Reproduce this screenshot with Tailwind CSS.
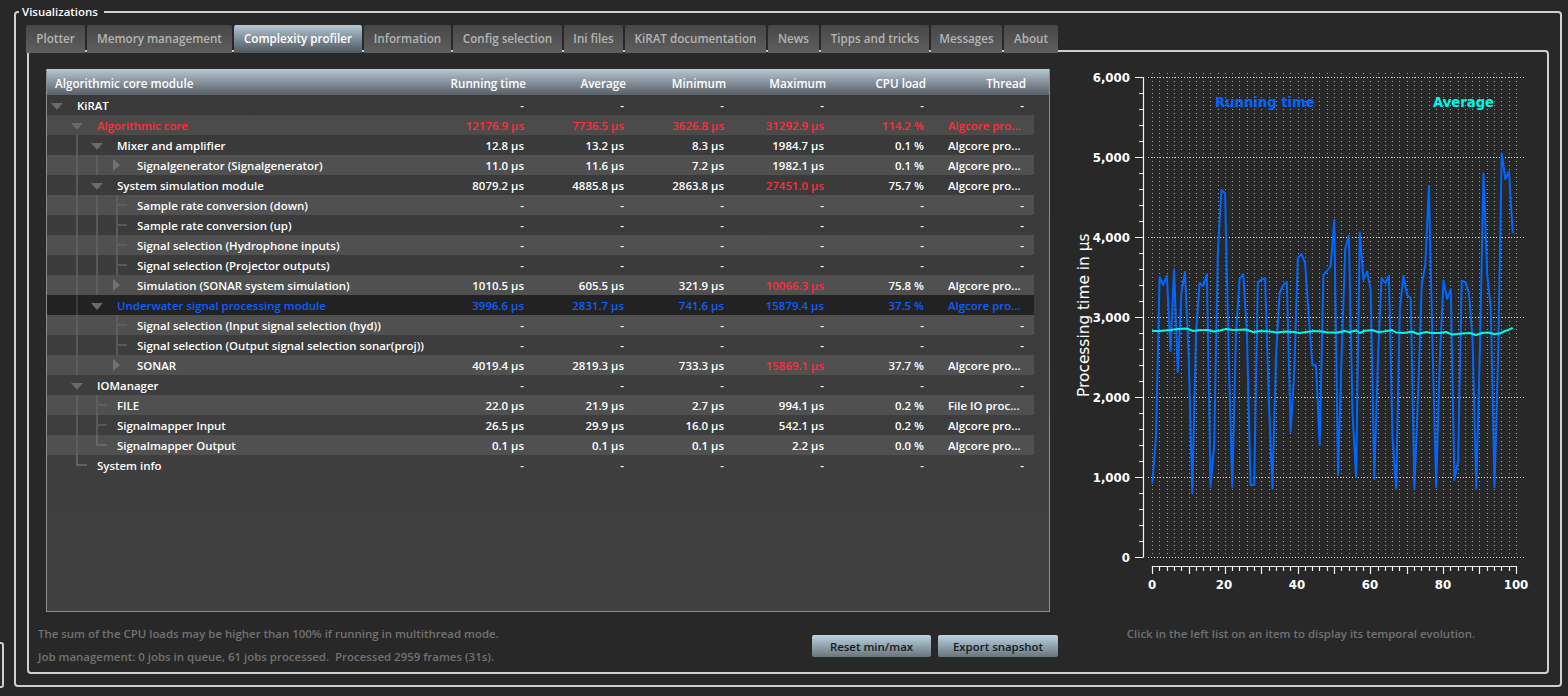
<!DOCTYPE html>
<html><head><meta charset="utf-8"><script src="https://cdn.jsdelivr.net/npm/@tailwindcss/browser@4"></script></head>
<body class="bg-[#282828] overflow-hidden">
<div class="w-[1568px] h-[696px] flex items-start font-['Open_Sans',sans-serif] text-[11.45px] font-semibold text-white">
  <div class="w-[4px] h-[46px] mt-[642px] border-2 border-l-0 border-[#cfcfcf] rounded-r-[3px] shrink-0"></div>
  <div class="relative w-[1548px] h-[676px] mt-[11px] ml-[10px] border-2 border-[#cfcfcf] rounded-[4px] pt-[12px] pl-[11px] pr-[11px]">
    <div class="absolute -top-[9px] left-[3px] bg-[#282828] pl-[3px] pr-[6px] h-[16px] leading-[16px] text-white">Visualizations</div>
    <div class="relative z-10 flex gap-[2px] h-[28px] -ml-px -mb-[3px] text-[#b4b4b4] text-[11.65px] leading-[27px] text-center">
      <div class="w-[59px] rounded-t-[2px] bg-gradient-to-b from-[#474747] to-[#5f5f5f]">Plotter</div>
      <div class="w-[145px] rounded-t-[2px] bg-gradient-to-b from-[#474747] to-[#5f5f5f]">Memory management</div>
      <div class="w-[128px] rounded-t-[2px] bg-gradient-to-b from-[#b4c8d6] to-[#4e565c] text-white">Complexity profiler</div>
      <div class="w-[87px] rounded-t-[2px] bg-gradient-to-b from-[#474747] to-[#5f5f5f]">Information</div>
      <div class="w-[109px] rounded-t-[2px] bg-gradient-to-b from-[#474747] to-[#5f5f5f]">Config selection</div>
      <div class="w-[59px] rounded-t-[2px] bg-gradient-to-b from-[#474747] to-[#5f5f5f]">Ini files</div>
      <div class="w-[141px] rounded-t-[2px] bg-gradient-to-b from-[#474747] to-[#5f5f5f]">KiRAT documentation</div>
      <div class="w-[51px] rounded-t-[2px] bg-gradient-to-b from-[#474747] to-[#5f5f5f]">News</div>
      <div class="w-[108px] rounded-t-[2px] bg-gradient-to-b from-[#474747] to-[#5f5f5f]">Tipps and tricks</div>
      <div class="w-[71px] rounded-t-[2px] bg-gradient-to-b from-[#474747] to-[#5f5f5f]">Messages</div>
      <div class="w-[54px] rounded-t-[2px] bg-gradient-to-b from-[#474747] to-[#5f5f5f]">About</div>
    </div>
    <div class="w-[1522px] h-[624px] border-2 border-[#cfcfcf] rounded-[4px] flex pl-[9px]">
      <div class="w-[1022px] shrink-0 pt-[17px]">
        <div class="ml-[8px] w-[1004px] h-[543px] border border-[#8d8d8d] bg-gradient-to-b from-[#393939] to-[#404040]">
          <div class="grid grid-cols-[387px_repeat(6,100px)] h-[26px] text-[11.65px] leading-[30px] -mt-px bg-gradient-to-b from-[#b6c9d7] to-[#5a6066] text-right">
            <div class="text-left pl-[8px]">Algorithmic core module</div><div class="pr-[8px]">Running time</div><div class="pr-[8px]">Average</div><div class="pr-[8px]">Minimum</div><div class="pr-[8px]">Maximum</div><div class="pr-[8px]">CPU load</div><div class="pr-[8px]">Thread</div>
          </div>
          <div class="w-[987px]">
          <div class="grid grid-cols-[387px_repeat(6,100px)] h-5 leading-[21px] text-right *:pr-[10px]">
            <div class="!pr-0 flex text-left"><svg class="w-5 h-5" viewBox="0 0 20 20"><path d="M4 8H16L10 15Z" fill="#6a6a6a"/></svg><span class="ml-[10px]">KiRAT</span></div><div>-</div><div>-</div><div>-</div><div>-</div><div>-</div><div>-</div>
          </div>
          <div class="grid grid-cols-[387px_repeat(6,100px)] h-5 leading-[21px] text-right *:pr-[10px] bg-[#4b4b4b] text-[#ff2d3c]">
            <div class="!pr-0 flex text-left"><span class="w-5"></span><svg class="w-5 h-5" viewBox="0 0 20 20"><path d="M4 8H16L10 15Z" fill="#6a6a6a"/></svg><span class="ml-[10px]">Algorithmic core</span></div><div>12176.9 µs</div><div>7736.5 µs</div><div>3626.8 µs</div><div>31292.9 µs</div><div>114.2 %</div><div class="text-left pl-[14px] !pr-0">Algcore pro...</div>
          </div>
          <div class="grid grid-cols-[387px_repeat(6,100px)] h-5 leading-[21px] text-right *:pr-[10px]">
            <div class="!pr-0 flex text-left"><span class="w-5"></span><svg class="w-5 h-5" viewBox="0 0 20 20"><path d="M10 0V20" stroke="#585858" stroke-width="2"/></svg><svg class="w-5 h-5" viewBox="0 0 20 20"><path d="M4 8H16L10 15Z" fill="#6a6a6a"/></svg><span class="ml-[10px]">Mixer and amplifier</span></div><div>12.8 µs</div><div>13.2 µs</div><div>8.3 µs</div><div>1984.7 µs</div><div>0.1 %</div><div class="text-left pl-[14px] !pr-0">Algcore pro...</div>
          </div>
          <div class="grid grid-cols-[387px_repeat(6,100px)] h-5 leading-[21px] text-right *:pr-[10px] bg-[#505050]">
            <div class="!pr-0 flex text-left"><span class="w-5"></span><svg class="w-5 h-5" viewBox="0 0 20 20"><path d="M10 0V20" stroke="#5e5e5e" stroke-width="2"/></svg><svg class="w-5 h-5" viewBox="0 0 20 20"><path d="M10 0V20" stroke="#5e5e5e" stroke-width="2"/></svg><svg class="w-5 h-5" viewBox="0 0 20 20"><path d="M6 4V16L13 10Z" fill="#727272"/></svg><span class="ml-[10px]">Signalgenerator (Signalgenerator)</span></div><div>11.0 µs</div><div>11.6 µs</div><div>7.2 µs</div><div>1982.1 µs</div><div>0.1 %</div><div class="text-left pl-[14px] !pr-0">Algcore pro...</div>
          </div>
          <div class="grid grid-cols-[387px_repeat(6,100px)] h-5 leading-[21px] text-right *:pr-[10px]">
            <div class="!pr-0 flex text-left"><span class="w-5"></span><svg class="w-5 h-5" viewBox="0 0 20 20"><path d="M10 0V20" stroke="#585858" stroke-width="2"/></svg><svg class="w-5 h-5" viewBox="0 0 20 20"><path d="M4 8H16L10 15Z" fill="#6a6a6a"/></svg><span class="ml-[10px]">System simulation module</span></div><div>8079.2 µs</div><div>4885.8 µs</div><div>2863.8 µs</div><div class="text-[#ff2d3c]">27451.0 µs</div><div>75.7 %</div><div class="text-left pl-[14px] !pr-0">Algcore pro...</div>
          </div>
          <div class="grid grid-cols-[387px_repeat(6,100px)] h-5 leading-[21px] text-right *:pr-[10px] bg-[#505050]">
            <div class="!pr-0 flex text-left"><span class="w-5"></span><svg class="w-5 h-5" viewBox="0 0 20 20"><path d="M10 0V20" stroke="#5e5e5e" stroke-width="2"/></svg><svg class="w-5 h-5" viewBox="0 0 20 20"><path d="M10 0V20" stroke="#5e5e5e" stroke-width="2"/></svg><svg class="w-5 h-5" viewBox="0 0 20 20"><path d="M10 0V20M10 10H20" stroke="#5e5e5e" stroke-width="2"/></svg><span class="ml-[10px]">Sample rate conversion (down)</span></div><div>-</div><div>-</div><div>-</div><div>-</div><div>-</div><div>-</div>
          </div>
          <div class="grid grid-cols-[387px_repeat(6,100px)] h-5 leading-[21px] text-right *:pr-[10px]">
            <div class="!pr-0 flex text-left"><span class="w-5"></span><svg class="w-5 h-5" viewBox="0 0 20 20"><path d="M10 0V20" stroke="#585858" stroke-width="2"/></svg><svg class="w-5 h-5" viewBox="0 0 20 20"><path d="M10 0V20" stroke="#585858" stroke-width="2"/></svg><svg class="w-5 h-5" viewBox="0 0 20 20"><path d="M10 0V20M10 10H20" stroke="#585858" stroke-width="2"/></svg><span class="ml-[10px]">Sample rate conversion (up)</span></div><div>-</div><div>-</div><div>-</div><div>-</div><div>-</div><div>-</div>
          </div>
          <div class="grid grid-cols-[387px_repeat(6,100px)] h-5 leading-[21px] text-right *:pr-[10px] bg-[#505050]">
            <div class="!pr-0 flex text-left"><span class="w-5"></span><svg class="w-5 h-5" viewBox="0 0 20 20"><path d="M10 0V20" stroke="#5e5e5e" stroke-width="2"/></svg><svg class="w-5 h-5" viewBox="0 0 20 20"><path d="M10 0V20" stroke="#5e5e5e" stroke-width="2"/></svg><svg class="w-5 h-5" viewBox="0 0 20 20"><path d="M10 0V20M10 10H20" stroke="#5e5e5e" stroke-width="2"/></svg><span class="ml-[10px]">Signal selection (Hydrophone inputs)</span></div><div>-</div><div>-</div><div>-</div><div>-</div><div>-</div><div>-</div>
          </div>
          <div class="grid grid-cols-[387px_repeat(6,100px)] h-5 leading-[21px] text-right *:pr-[10px]">
            <div class="!pr-0 flex text-left"><span class="w-5"></span><svg class="w-5 h-5" viewBox="0 0 20 20"><path d="M10 0V20" stroke="#585858" stroke-width="2"/></svg><svg class="w-5 h-5" viewBox="0 0 20 20"><path d="M10 0V20" stroke="#585858" stroke-width="2"/></svg><svg class="w-5 h-5" viewBox="0 0 20 20"><path d="M10 0V20M10 10H20" stroke="#585858" stroke-width="2"/></svg><span class="ml-[10px]">Signal selection (Projector outputs)</span></div><div>-</div><div>-</div><div>-</div><div>-</div><div>-</div><div>-</div>
          </div>
          <div class="grid grid-cols-[387px_repeat(6,100px)] h-5 leading-[21px] text-right *:pr-[10px] bg-[#505050]">
            <div class="!pr-0 flex text-left"><span class="w-5"></span><svg class="w-5 h-5" viewBox="0 0 20 20"><path d="M10 0V20" stroke="#5e5e5e" stroke-width="2"/></svg><svg class="w-5 h-5" viewBox="0 0 20 20"><path d="M10 0V20" stroke="#5e5e5e" stroke-width="2"/></svg><svg class="w-5 h-5" viewBox="0 0 20 20"><path d="M6 4V16L13 10Z" fill="#727272"/></svg><span class="ml-[10px]">Simulation (SONAR system simulation)</span></div><div>1010.5 µs</div><div>605.5 µs</div><div>321.9 µs</div><div class="text-[#ff2d3c]">10066.3 µs</div><div>75.8 %</div><div class="text-left pl-[14px] !pr-0">Algcore pro...</div>
          </div>
          <div class="grid grid-cols-[387px_repeat(6,100px)] h-5 leading-[21px] text-right *:pr-[10px] bg-[#222222] text-[#0b5fff]">
            <div class="!pr-0 flex text-left"><span class="w-5"></span><svg class="w-5 h-5" viewBox="0 0 20 20"><path d="M10 0V20" stroke="#3c3c3c" stroke-width="2"/></svg><svg class="w-5 h-5" viewBox="0 0 20 20"><path d="M4 8H16L10 15Z" fill="#6a6a6a"/></svg><span class="ml-[10px]">Underwater signal processing module</span></div><div>3996.6 µs</div><div>2831.7 µs</div><div>741.6 µs</div><div>15879.4 µs</div><div>37.5 %</div><div class="text-left pl-[14px] !pr-0">Algcore pro...</div>
          </div>
          <div class="grid grid-cols-[387px_repeat(6,100px)] h-5 leading-[21px] text-right *:pr-[10px] bg-[#505050]">
            <div class="!pr-0 flex text-left"><span class="w-5"></span><svg class="w-5 h-5" viewBox="0 0 20 20"><path d="M10 0V20" stroke="#5e5e5e" stroke-width="2"/></svg><span class="w-5"></span><svg class="w-5 h-5" viewBox="0 0 20 20"><path d="M10 0V20M10 10H20" stroke="#5e5e5e" stroke-width="2"/></svg><span class="ml-[10px]">Signal selection (Input signal selection (hyd))</span></div><div>-</div><div>-</div><div>-</div><div>-</div><div>-</div><div>-</div>
          </div>
          <div class="grid grid-cols-[387px_repeat(6,100px)] h-5 leading-[21px] text-right *:pr-[10px]">
            <div class="!pr-0 flex text-left"><span class="w-5"></span><svg class="w-5 h-5" viewBox="0 0 20 20"><path d="M10 0V20" stroke="#585858" stroke-width="2"/></svg><span class="w-5"></span><svg class="w-5 h-5" viewBox="0 0 20 20"><path d="M10 0V20M10 10H20" stroke="#585858" stroke-width="2"/></svg><span class="ml-[10px]">Signal selection (Output signal selection sonar(proj))</span></div><div>-</div><div>-</div><div>-</div><div>-</div><div>-</div><div>-</div>
          </div>
          <div class="grid grid-cols-[387px_repeat(6,100px)] h-5 leading-[21px] text-right *:pr-[10px] bg-[#505050]">
            <div class="!pr-0 flex text-left"><span class="w-5"></span><svg class="w-5 h-5" viewBox="0 0 20 20"><path d="M10 0V20" stroke="#5e5e5e" stroke-width="2"/></svg><span class="w-5"></span><svg class="w-5 h-5" viewBox="0 0 20 20"><path d="M6 4V16L13 10Z" fill="#727272"/></svg><span class="ml-[10px]">SONAR</span></div><div>4019.4 µs</div><div>2819.3 µs</div><div>733.3 µs</div><div class="text-[#ff2d3c]">15869.1 µs</div><div>37.7 %</div><div class="text-left pl-[14px] !pr-0">Algcore pro...</div>
          </div>
          <div class="grid grid-cols-[387px_repeat(6,100px)] h-5 leading-[21px] text-right *:pr-[10px]">
            <div class="!pr-0 flex text-left"><span class="w-5"></span><svg class="w-5 h-5" viewBox="0 0 20 20"><path d="M4 8H16L10 15Z" fill="#6a6a6a"/></svg><span class="ml-[10px]">IOManager</span></div><div>-</div><div>-</div><div>-</div><div>-</div><div>-</div><div>-</div>
          </div>
          <div class="grid grid-cols-[387px_repeat(6,100px)] h-5 leading-[21px] text-right *:pr-[10px] bg-[#505050]">
            <div class="!pr-0 flex text-left"><span class="w-5"></span><svg class="w-5 h-5" viewBox="0 0 20 20"><path d="M10 0V20" stroke="#5e5e5e" stroke-width="2"/></svg><svg class="w-5 h-5" viewBox="0 0 20 20"><path d="M10 0V20M10 10H20" stroke="#5e5e5e" stroke-width="2"/></svg><span class="ml-[10px]">FILE</span></div><div>22.0 µs</div><div>21.9 µs</div><div>2.7 µs</div><div>994.1 µs</div><div>0.2 %</div><div class="text-left pl-[14px] !pr-0">File IO proc...</div>
          </div>
          <div class="grid grid-cols-[387px_repeat(6,100px)] h-5 leading-[21px] text-right *:pr-[10px]">
            <div class="!pr-0 flex text-left"><span class="w-5"></span><svg class="w-5 h-5" viewBox="0 0 20 20"><path d="M10 0V20" stroke="#585858" stroke-width="2"/></svg><svg class="w-5 h-5" viewBox="0 0 20 20"><path d="M10 0V20M10 10H20" stroke="#585858" stroke-width="2"/></svg><span class="ml-[10px]">Signalmapper Input</span></div><div>26.5 µs</div><div>29.9 µs</div><div>16.0 µs</div><div>542.1 µs</div><div>0.2 %</div><div class="text-left pl-[14px] !pr-0">Algcore pro...</div>
          </div>
          <div class="grid grid-cols-[387px_repeat(6,100px)] h-5 leading-[21px] text-right *:pr-[10px] bg-[#505050]">
            <div class="!pr-0 flex text-left"><span class="w-5"></span><svg class="w-5 h-5" viewBox="0 0 20 20"><path d="M10 0V20" stroke="#5e5e5e" stroke-width="2"/></svg><svg class="w-5 h-5" viewBox="0 0 20 20"><path d="M10 0V10H20" fill="none" stroke="#6e6e6e" stroke-width="1.5"/></svg><span class="ml-[10px]">Signalmapper Output</span></div><div>0.1 µs</div><div>0.1 µs</div><div>0.1 µs</div><div>2.2 µs</div><div>0.0 %</div><div class="text-left pl-[14px] !pr-0">Algcore pro...</div>
          </div>
          <div class="grid grid-cols-[387px_repeat(6,100px)] h-5 leading-[21px] text-right *:pr-[10px]">
            <div class="!pr-0 flex text-left"><span class="w-5"></span><svg class="w-5 h-5" viewBox="0 0 20 20"><path d="M10 0V10H20" fill="none" stroke="#6e6e6e" stroke-width="1.5"/></svg><span class="ml-[10px]">System info</span></div><div>-</div><div>-</div><div>-</div><div>-</div><div>-</div><div>-</div>
          </div>
          </div>
        </div>
        <div class="flex justify-between items-start pr-[2px] mt-[10px] text-[#727272]">
          <div class="leading-[23px]"><div>The sum of the CPU loads may be higher than 100% if running in multithread mode.</div><div>Job management: 0 jobs in queue, 61 jobs processed.&nbsp; Processed 2959 frames (31s).</div></div>
          <div class="flex gap-[7px] mt-[13px] text-[#15191c]">
            <div class="w-[119px] h-[22px] leading-[23px] text-center rounded-[2px] bg-gradient-to-b from-[#bcd4e2] to-[#69757d]">Reset min/max</div>
            <div class="w-[120px] h-[22px] leading-[23px] text-center rounded-[2px] bg-gradient-to-b from-[#bcd4e2] to-[#69757d]">Export snapshot</div>
          </div>
        </div>
      </div>
      <div class="flex-1 flex flex-col">
        <svg class="w-[487px] h-[540px] mt-[8px] font-['DejaVu_Sans',sans-serif]" viewBox="1060 60 487 540">
          <g stroke="#ffffff" stroke-width="1" fill="none">
            <path stroke-dasharray="1 2" opacity="0.85" d="M1148 77.5H1524M1148 157.5H1524M1148 237.5H1524M1148 317.5H1524M1148 397.5H1524M1148 477.5H1524M1148 557.5H1524"/>
            <path stroke-dasharray="1 3" opacity="0.55" d="M1152.5 73V557M1159.5 73V557M1167.5 73V557M1174.5 73V557M1181.5 73V557M1189.5 73V557M1196.5 73V557M1203.5 73V557M1210.5 73V557M1218.5 73V557M1225.5 73V557M1232.5 73V557M1239.5 73V557M1247.5 73V557M1254.5 73V557M1261.5 73V557M1269.5 73V557M1276.5 73V557M1283.5 73V557M1290.5 73V557M1298.5 73V557M1305.5 73V557M1312.5 73V557M1319.5 73V557M1327.5 73V557M1334.5 73V557M1341.5 73V557M1349.5 73V557M1356.5 73V557M1363.5 73V557M1370.5 73V557M1378.5 73V557M1385.5 73V557M1392.5 73V557M1399.5 73V557M1407.5 73V557M1414.5 73V557M1421.5 73V557M1429.5 73V557M1436.5 73V557M1443.5 73V557M1450.5 73V557M1458.5 73V557M1465.5 73V557M1472.5 73V557M1479.5 73V557M1487.5 73V557M1494.5 73V557M1501.5 73V557M1509.5 73V557M1516.5 73V557"/>
          </g>
          <g stroke="#f2f2f2" stroke-width="1.2" fill="none">
            <path d="M1143.5 77V557.6"/>
            <path d="M1135 77.5H1143M1135 157.5H1143M1135 237.5H1143M1135 317.5H1143M1135 397.5H1143M1135 477.5H1143M1135 557.5H1143"/>
            <path d="M1139 93.5H1143M1139 109.5H1143M1139 125.5H1143M1139 141.5H1143M1139 173.5H1143M1139 189.5H1143M1139 205.5H1143M1139 221.5H1143M1139 253.5H1143M1139 269.5H1143M1139 285.5H1143M1139 301.5H1143M1139 333.5H1143M1139 349.5H1143M1139 365.5H1143M1139 381.5H1143M1139 413.5H1143M1139 429.5H1143M1139 445.5H1143M1139 461.5H1143M1139 493.5H1143M1139 509.5H1143M1139 525.5H1143M1139 541.5H1143"/>
            <path d="M1152 566.5H1516.8"/>
            <path d="M1152.5 566V574M1225.5 566V574M1298.5 566V574M1370.5 566V574M1443.5 566V574M1516.5 566V574M1261.5 566V574M1334.5 566V574M1407.5 566V574M1479.5 566V574M1189.5 566V574"/>
            <path d="M1159.5 566V571M1167.5 566V571M1174.5 566V571M1181.5 566V571M1196.5 566V571M1203.5 566V571M1210.5 566V571M1218.5 566V571M1232.5 566V571M1239.5 566V571M1247.5 566V571M1254.5 566V571M1269.5 566V571M1276.5 566V571M1283.5 566V571M1290.5 566V571M1305.5 566V571M1312.5 566V571M1319.5 566V571M1327.5 566V571M1341.5 566V571M1349.5 566V571M1356.5 566V571M1363.5 566V571M1378.5 566V571M1385.5 566V571M1392.5 566V571M1399.5 566V571M1414.5 566V571M1421.5 566V571M1429.5 566V571M1436.5 566V571M1450.5 566V571M1458.5 566V571M1465.5 566V571M1472.5 566V571M1487.5 566V571M1494.5 566V571M1501.5 566V571M1509.5 566V571"/>
          </g>
          <polyline fill="none" stroke="#0066ff" stroke-width="2" stroke-linejoin="round" points="1152.3,483.7 1156,437 1159.6,277 1163.2,285 1166.9,275.7 1170.5,350.9 1174.1,269.3 1177.8,372 1181.4,293.3 1185,271.7 1188.7,357.3 1192.3,493.3 1196,333 1199.6,283 1203.2,286 1206.9,274 1210.5,486.9 1214.2,445.3 1217.8,253 1221.4,190 1225.1,193.3 1228.7,357.3 1232.3,486.9 1236,333 1239.6,279 1243.3,274 1246.9,333 1250.5,485 1254.2,485 1257.8,282 1261.5,280 1265.1,278 1268.7,397 1272.4,488.5 1276,357 1279.6,293 1283.3,285 1286.9,282 1290.6,431.7 1294.2,373 1297.8,258 1301.5,254 1305.1,263 1308.8,317 1312.4,365.3 1316,365.3 1319.7,445 1323.4,275 1327,271 1330.7,266 1334.3,219.7 1338,475 1341.6,357 1345.2,249 1348.9,235.7 1352.5,413 1356.1,477.3 1359.8,232.5 1363.4,279.7 1367.1,271.7 1370.7,289.3 1374.3,479 1378,357 1381.6,278 1385.3,283 1388.9,275.7 1392.5,437.3 1396.2,488.5 1399.8,309 1403.5,275.7 1407.1,295 1410.7,298 1414.4,488.5 1418,397 1421.7,285 1425.3,265 1428.9,186 1432.6,349 1436.2,486.9 1439.9,357 1443.5,280.5 1447.1,298.9 1450.8,289 1454.4,479.7 1458.1,461.3 1461.7,281 1465.3,282 1469,293 1472.6,341 1476.3,488.5 1479.9,349 1483.5,173.3 1487.2,274 1490.8,309 1494.5,487 1498.1,357 1501.7,153.3 1505.4,179 1509,171.7 1512.7,233"/>
          <polyline fill="none" stroke="#00f6e6" stroke-width="2" stroke-linejoin="round" points="1152,331 1160,331 1170,330 1178,329 1187,328.5 1193,331 1200,330 1208,330 1214,331.5 1220,330.5 1226,329 1233,330 1246,329.5 1253,332 1260,331 1270,331.5 1277,332.5 1285,331.5 1294,332 1300,333 1306,332 1314,331 1322,331.5 1328,332.5 1338,332.5 1344,331 1350,332 1356,330.5 1360,333 1364,331 1372,330 1378,332 1384,331.5 1392,330 1396,332.5 1404,333 1412,331.5 1418,334 1426,332 1432,333 1440,333 1446,332 1452,334.5 1462,333.5 1470,333 1476,335 1482,333 1488,332.5 1494,334 1500,333.5 1505,331 1508,330 1512.7,328"/>
          <g fill="#ffffff" font-size="11.8" font-weight="700">
            <text x="1130" y="82" text-anchor="end">6,000</text><text x="1130" y="162" text-anchor="end">5,000</text><text x="1130" y="242" text-anchor="end">4,000</text><text x="1130" y="322" text-anchor="end">3,000</text><text x="1130" y="402" text-anchor="end">2,000</text><text x="1130" y="482" text-anchor="end">1,000</text><text x="1130" y="562" text-anchor="end">0</text>
            <text x="1152" y="589" text-anchor="middle">0</text><text x="1224" y="589" text-anchor="middle">20</text><text x="1297" y="589" text-anchor="middle">40</text><text x="1370" y="589" text-anchor="middle">60</text><text x="1443" y="589" text-anchor="middle">80</text><text x="1516" y="589" text-anchor="middle">100</text>
          </g>
          <text transform="translate(1089 397) rotate(-90)" fill="#ffffff" font-size="15.4" font-weight="500">Processing time in µs</text>
          <text x="1215" y="107" fill="#0066ff" font-size="13.2" font-weight="700">Running time</text>
          <text x="1433" y="107" fill="#00f6e6" font-size="13.2" font-weight="700">Average</text>
        </svg>
        <div class="text-center text-[#727272] mt-[25px] pr-[5px]">Click in the left list on an item to display its temporal evolution.</div>
      </div>
    </div>
  </div>
</div>
</body></html>
